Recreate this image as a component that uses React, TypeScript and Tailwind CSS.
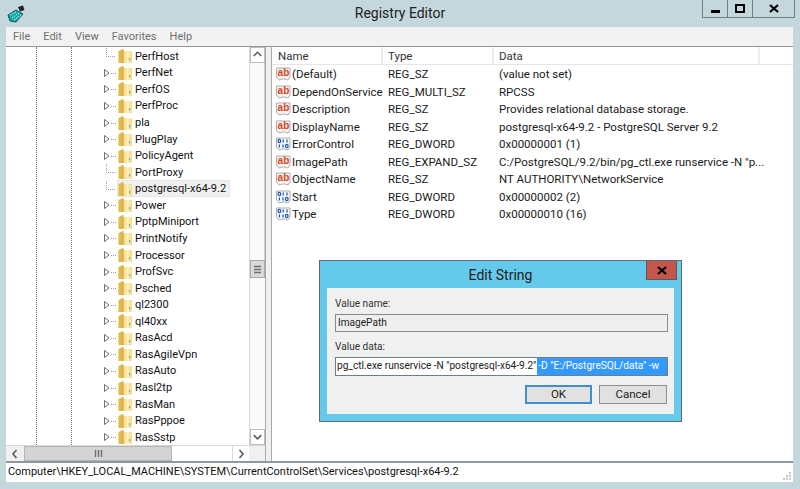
import React from "react";

const tree: [string, boolean][] = [
  ["PerfHost", false], ["PerfNet", true], ["PerfOS", true], ["PerfProc", true], ["pla", true],
  ["PlugPlay", true], ["PolicyAgent", true], ["PortProxy", false], ["postgresql-x64-9.2", false],
  ["Power", true], ["PptpMiniport", true], ["PrintNotify", true], ["Processor", true], ["ProfSvc", true],
  ["Psched", true], ["ql2300", true], ["ql40xx", true], ["RasAcd", true], ["RasAgileVpn", true],
  ["RasAuto", true], ["Rasl2tp", true], ["RasMan", true], ["RasPppoe", true], ["RasSstp", true],
];

const values: [string, string, string, boolean][] = [
  ["(Default)", "REG_SZ", "(value not set)", true],
  ["DependOnService", "REG_MULTI_SZ", "RPCSS", true],
  ["Description", "REG_SZ", "Provides relational database storage.", true],
  ["DisplayName", "REG_SZ", "postgresql-x64-9.2 - PostgreSQL Server 9.2", true],
  ["ErrorControl", "REG_DWORD", "0x00000001 (1)", false],
  ["ImagePath", "REG_EXPAND_SZ", 'C:/PostgreSQL/9.2/bin/pg_ctl.exe runservice -N "p...', true],
  ["ObjectName", "REG_SZ", "NT AUTHORITY\\NetworkService", true],
  ["Start", "REG_DWORD", "0x00000002 (2)", false],
  ["Type", "REG_DWORD", "0x00000010 (16)", false],
];

function Folder() {
  return (
    <svg width="15" height="16" viewBox="0 0 15 16" className="shrink-0">
      <defs>
        <linearGradient id="fg" x1="0" x2="1" y1="0" y2="0">
          <stop offset="0" stopColor="#f3d678" />
          <stop offset="0.5" stopColor="#fdf0b8" />
          <stop offset="1" stopColor="#f2dc8a" />
        </linearGradient>
      </defs>
      <path d="M0.5 3 L5 1 L5 15 L0.5 15 Z" fill="#e0b94c" />
      <path d="M5 3 H14 V15 H5 Z" fill="url(#fg)" />
      <path d="M5 1 V15" stroke="#c49d38" strokeWidth="0.8" />
      <rect x="11" y="10" width="1.2" height="2.4" fill="#6fa8c4" />
    </svg>
  );
}

function Expander({ show }: { show: boolean }) {
  return (
    <svg width="24" height="16" viewBox="0 0 24 16" className="shrink-0">
      {show ? (
        <>
          <path d="M5.5 4.5 L10 8 L5.5 11.5 Z" fill="#fff" stroke="#6e6e6e" />
          <path d="M12 8.5 H17" stroke="#9a9a9a" strokeDasharray="1 1" />
        </>
      ) : (
        <path d="M7.5 0 V8.5 H17" stroke="#9a9a9a" strokeDasharray="1 1" fill="none" />
      )}
    </svg>
  );
}

function AbIcon() {
  return (
    <svg width="15" height="15" viewBox="0 0 15 15" className="shrink-0">
      <path d="M0.5 1 H14 V10 L12 13 L7.5 11.8 L3 13 L0.5 10 Z" fill="#f8f4f2" stroke="#adadad" />
      <text x="1.6" y="9.2" fontSize="10" fontWeight="700" fill="#d8431f" fontFamily="'Liberation Sans', sans-serif">ab</text>
    </svg>
  );
}

function BinIcon() {
  return (
    <svg width="15" height="15" viewBox="0 0 15 15" className="shrink-0">
      <path d="M0.5 1 H14 V10 L12 13 L7.5 11.8 L3 13 L0.5 10 Z" fill="#f4f7fb" stroke="#adadad" />
      <g fill="none" stroke="#1c56bb" strokeWidth="1.2">
        <ellipse cx="3.4" cy="4" rx="1.3" ry="1.6" />
        <path d="M7.2 2.4 V5.6 M11 2.4 V5.6" />
        <path d="M3.4 7.4 V10.6 M7 7.4 V10.6" />
        <ellipse cx="10.8" cy="9" rx="1.3" ry="1.6" />
      </g>
    </svg>
  );
}

function Chevron({ dir }: { dir: "up" | "down" | "left" | "right" }) {
  const d = { up: "M3 8 L7 4 L11 8", down: "M3 5 L7 9 L11 5", left: "M8.5 3 L5 7 L8.5 11", right: "M5.5 3 L9 7 L5.5 11" }[dir];
  return (
    <svg width="14" height="14" viewBox="0 0 14 14">
      <path d={d} fill="none" stroke="#5a5a5a" strokeWidth="1.6" />
    </svg>
  );
}

function Grip({ vertical }: { vertical?: boolean }) {
  return (
    <svg width="9" height="9" viewBox="0 0 9 9">
      {vertical ? (
        <path d="M1 1.5 H8 M1 4.5 H8 M1 7.5 H8" stroke="#6e6e6e" strokeWidth="1.4" />
      ) : (
        <path d="M1.5 1 V8 M4.5 1 V8 M7.5 1 V8" stroke="#6e6e6e" strokeWidth="1.4" />
      )}
    </svg>
  );
}

export default function App() {
  return (
    <div className="relative w-[800px] h-[489px] overflow-hidden bg-[#c3d7dd] flex flex-col font-['Roboto',sans-serif] text-[#1c1c1c] text-[11.5px] leading-none">
      {/* Title bar */}
      <div className="relative h-[27px] shrink-0 flex items-start">
        <svg width="20" height="20" viewBox="0 0 20 20" className="ml-[6px] mt-[4px]">
          <path d="M2 11 L10 6 L17 10 L10 18 L4 17 Z" fill="#12a5a5" stroke="#0a4f50" strokeWidth="0.9" />
          <path d="M4 11 L10 8 M6 14 L13 9 M8 16 L15 11" stroke="#8ff0e8" strokeWidth="1.3" strokeDasharray="1.5 1" />
          <path d="M12 3 L17 1.5 L18.5 6 L14 7.5 Z" fill="#222" />
        </svg>
        <div className="absolute left-0 right-0 top-[6px] text-center text-[14px] text-[#222]">Registry Editor</div>
        <div className="ml-auto mr-[5px] flex h-[18px] border border-t-0 border-[#6f7f86]">
          <div className="w-[25px] flex items-end justify-center pb-[4px] border-r border-[#6f7f86]">
            <div className="w-[9px] h-[3px] bg-black" />
          </div>
          <div className="w-[25px] flex items-center justify-center border-r border-[#6f7f86]">
            <div className="w-[10px] h-[9px] border-2 border-black" />
          </div>
          <div className="w-[41px] flex items-center justify-center">
            <svg width="10" height="9" viewBox="0 0 10 9"><path d="M1 1 L9 8 M9 1 L1 8" stroke="#000" strokeWidth="2.2" /></svg>
          </div>
        </div>
      </div>

      {/* Client area */}
      <div className="flex-1 flex flex-col ml-[6px] mr-[7px] mb-[7px] min-h-0">
        {/* Menu */}
        <div className="h-[19px] shrink-0 bg-[#f2f2f2] flex items-center pl-[7px] gap-[13px] text-[#6f6f6f] text-[11px]">
          <span>File</span><span>Edit</span><span>View</span><span>Favorites</span><span>Help</span>
        </div>

        <div className="flex-1 min-h-0 flex bg-[#f0f0f0] border-t border-[#8f989c]">
          {/* Tree */}
          <div className="w-[260px] shrink-0 flex flex-col bg-white border-r border-[#a9a9a9]">
            <div className="flex-1 min-h-0 flex">
              <div className="flex-1 min-w-0 relative flex flex-col pt-[1px] pl-[93px] overflow-hidden text-[11px]">
                <div className="absolute left-[30px] top-0 bottom-0 border-l border-dotted border-[#777]" />
                <div className="absolute left-[65px] top-0 bottom-0 border-l border-dotted border-[#777]" />
                {tree.map(([name, exp]) => (
                  <div key={name} className="h-[16.565px] shrink-0 flex items-center">
                    <Expander show={exp} />
                    <div className={"flex items-center h-[17px] -ml-[6px] pr-[3px] border " + (name === "postgresql-x64-9.2" ? "bg-[#f0f0f0] border-[#e6e6e6]" : "border-transparent")}>
                      <Folder />
                      <span className="ml-[2px] text-[#111]">{name}</span>
                    </div>
                  </div>
                ))}
              </div>
              {/* V scrollbar */}
              <div className="w-[16px] shrink-0 flex flex-col bg-[#fafafa] border-l border-[#d9d9d9]">
                <div className="h-[16px] border border-[#bdbdbd] bg-white flex items-center justify-center"><Chevron dir="up" /></div>
                <div className="h-[197px] border-r border-[#cfcfcf]" />
                <div className="h-[18px] bg-[#d9d9d9] border border-[#ababab] flex items-center justify-center"><Grip vertical /></div>
                <div className="flex-1" />
                <div className="h-[16px] border border-[#bdbdbd] bg-white flex items-center justify-center"><Chevron dir="down" /></div>
              </div>
            </div>
            {/* H scrollbar */}
            <div className="h-[16px] shrink-0 flex bg-white border-t border-[#d9d9d9]">
              <div className="w-[18px] flex items-center justify-center bg-[#f0f0f0]"><Chevron dir="left" /></div>
              <div className="w-[148px] bg-[#d4d4d4] border border-[#b5b5b5] flex items-center justify-center"><Grip /></div>
              <div className="w-[60px]" />
              <div className="w-[17px] flex items-center justify-center bg-white border-l border-[#d9d9d9]"><Chevron dir="right" /></div>
              <div className="flex-1 bg-[#f0f0f0]" />
            </div>
          </div>

          {/* Splitter */}
          <div className="w-[5px] shrink-0 bg-[#f0f0f0]" />

          {/* List */}
          <div className="flex-1 min-w-0 bg-white border-l border-[#a9a9a9] flex flex-col">
            <div className="h-[18px] shrink-0 flex items-center border-b border-[#e5e5e5] text-[#333]">
              <div className="w-[111px] pl-[6px] pt-[2px] h-full flex items-center border-r-2 border-[#ededed]">Name</div>
              <div className="w-[111px] pl-[5px] pt-[2px] h-full flex items-center border-r-2 border-[#ededed]">Type</div>
              <div className="flex-1 pl-[5px] pt-[2px] h-full flex items-center border-r-2 border-[#ededed]">Data</div>
              <div className="w-[33px]" />
            </div>
            <div className="flex flex-col pt-[1px]">
              {values.map(([n, t, d, isStr]) => (
                <div key={n} className="h-[17.5px] shrink-0 flex items-center text-[#1a1a1a]">
                  <div className="w-[111px] pl-[4px] flex items-center gap-[1px]">
                    {isStr ? <AbIcon /> : <BinIcon />}
                    <span className="whitespace-nowrap">{n}</span>
                  </div>
                  <div className="w-[111px] pl-[5px] whitespace-nowrap">{t}</div>
                  <div className="flex-1 pl-[5px] whitespace-nowrap">{d}</div>
                </div>
              ))}
            </div>
          </div>
        </div>

        {/* Status bar */}
        <div className="h-[21px] shrink-0 bg-white border-t-2 border-[#8f989c] flex items-center pl-[2px] relative">
          <span className="text-[#111] text-[10.95px]">Computer\HKEY_LOCAL_MACHINE\SYSTEM\CurrentControlSet\Services\postgresql-x64-9.2</span>
          <svg width="10" height="10" viewBox="0 0 10 10" className="absolute right-[1px] bottom-[1px]">
            <path d="M7 1h2v2H7z M4 4h2v2H4z M7 4h2v2H7z M1 7h2v2H1z M4 7h2v2H4z M7 7h2v2H7z" fill="#c8c8c8" />
          </svg>
        </div>
      </div>

      {/* Edit String dialog */}
      <div className="absolute left-[319px] top-[260px] w-[363px] h-[162px] bg-[#65c9ec] border border-[#5d6a70] flex flex-col px-[7px] pb-[7px]">
        <div className="relative h-[27px] shrink-0 flex items-center justify-center text-[14px] text-[#222]">
          Edit String
          <div className="absolute -right-[3px] top-0 w-[31px] h-[19px] bg-[#c4574c] border border-[#5b5b5b] border-t-0 flex items-center justify-center">
            <svg width="10" height="9" viewBox="0 0 10 9"><path d="M1 1 L9 8 M9 1 L1 8" stroke="#000" strokeWidth="2.2" /></svg>
          </div>
        </div>
        <div className="flex-1 bg-[#f0f0f0] px-[8px] pt-[10px] flex flex-col text-[#333] text-[10.1px]">
          <div className="h-[12px] flex items-center">Value name:</div>
          <div className="mt-[4px] h-[18px] w-[333px] border border-[#8a8a8a] bg-[#eeeeee] flex items-center pl-[2px] text-[#222]">ImagePath</div>
          <div className="mt-[9px] h-[12px] flex items-center">Value data:</div>
          <div className="mt-[4px] h-[19px] w-[333px] border border-[#6f7f86] bg-white flex items-center pl-[1px] overflow-hidden whitespace-nowrap text-[#222]">
            <span>pg_ctl.exe runservice -N "postgresql-x64-9.2"</span>
            <span className="ml-[1px] bg-[#3399ff] text-white self-stretch flex items-center flex-1 pl-[1px]">-D "E:/PostgreSQL/data" -w</span>
          </div>
          <div className="mt-[9px] w-[333px] flex justify-end gap-[7px] pr-[1px] text-[#222] text-[11.5px]">
            <div className="w-[67px] h-[19px] bg-[#e1e1e1] border-2 border-[#3f8fcf] flex items-center justify-center">OK</div>
            <div className="w-[68px] h-[19px] bg-[#e1e1e1] border border-[#8f8f8f] flex items-center justify-center">Cancel</div>
          </div>
        </div>
      </div>
    </div>
  );
}
